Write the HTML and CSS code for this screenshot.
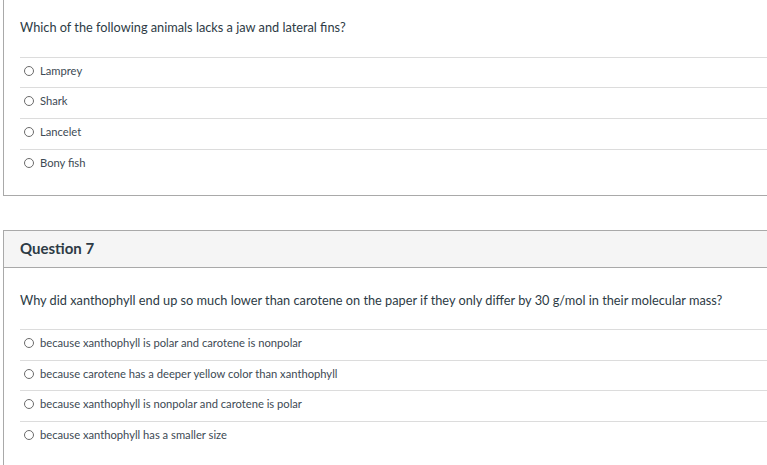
FILE: index.html
```html
<!DOCTYPE html>
<html>
<head>
<meta charset="utf-8">
<link rel="stylesheet" href="styles.css">
</head>
<body>
<div class="page">
  <div class="card card-top">
    <div class="qbody">
      <p class="qtext">Which of the following animals lacks a jaw and lateral fins?</p>
      <ul class="answers first">
        <li class="answer"><span class="radio"></span><span class="label">Lamprey</span></li>
        <li class="answer"><span class="radio"></span><span class="label">Shark</span></li>
        <li class="answer"><span class="radio"></span><span class="label">Lancelet</span></li>
        <li class="answer"><span class="radio"></span><span class="label">Bony fish</span></li>
      </ul>
    </div>
  </div>

  <div class="card card-q7">
    <div class="qheader">
      <h2 class="qtitle">Question 7</h2>
      <span class="pts">1 pts</span>
    </div>
    <div class="qbody body2">
      <p class="qtext">Why did xanthophyll end up so much lower than carotene on the paper if they only differ by 30 g/mol in their molecular mass?</p>
      <ul class="answers second">
        <li class="answer"><span class="radio"></span><span class="label">because xanthophyll is polar and carotene is nonpolar</span></li>
        <li class="answer"><span class="radio"></span><span class="label">because carotene has a deeper yellow color than xanthophyll</span></li>
        <li class="answer"><span class="radio"></span><span class="label">because xanthophyll is nonpolar and carotene is polar</span></li>
        <li class="answer"><span class="radio"></span><span class="label">because xanthophyll has a smaller size</span></li>
      </ul>
    </div>
  </div>
</div>
</body>
</html>
```

FILE: styles.css
```css
html, body {
  margin: 0;
  padding: 0;
  background: #ffffff;
  overflow: hidden;
}

body {
  width: 767px;
  height: 465px;
  font-family: Lato, "Open Sans", sans-serif;
  color: #2d3b45;
}

.page {
  padding-left: 3px;
  width: 820px;
}

.card {
  border-left: 1px solid #a9a9a9;
  background: #fff;
}

.card-top {
  border-bottom: 1px solid #a9a9a9;
  height: 196px;
  box-sizing: border-box;
}

.card-q7 {
  margin-top: 34px;
  border-top: 1px solid #a9a9a9;
  height: 240px;
}

.qbody {
  padding-left: 16px;
}

.qtext {
  margin: 0;
  font-size: 12.75px;
  line-height: 16px;
  padding-top: 19px;
  height: 37px;
  box-sizing: border-box;
  color: #2d3b45;
}

.answers {
  list-style: none;
  margin: 0;
  padding: 0;
  margin-top: 20px;
}

.answer {
  display: flex;
  align-items: flex-start;
  border-top: 1px solid #dcdcdc;
  height: 30px;
  box-sizing: content-box;
  font-size: 11.2px;
  line-height: 13px;
}

.first .answer:nth-child(1) {
  height: 29px;
}

.second .answer:nth-child(2) {
  height: 29px;
}

.radio {
  box-sizing: border-box;
  width: 10px;
  height: 10px;
  border: 1px solid #6b6b6b;
  border-radius: 50%;
  margin: 8px 6px 0 4px;
  flex: none;
}

.label {
  color: #3d4a54;
  padding-top: 6px;
}

.second .label {
  padding-top: 6px;
}

.qheader {
  display: flex;
  align-items: center;
  justify-content: space-between;
  background: #f5f5f5;
  border-bottom: 1px solid #a9a9a9;
  height: 36px;
  box-sizing: border-box;
  height: 37px;
  padding: 0 0 3px 16px;
}

.qtitle {
  margin: 0;
  font-size: 15px;
  font-weight: 700;
  color: #2d3b45;
}

.pts {
  font-size: 12px;
  color: #c4641e;
  margin-right: 28px;
  font-weight: 700;
}

.body2 .qtext {
  padding-top: 24px;
  height: 40px;
}

.body2 .answers {
  margin-top: 21px;
}
```
